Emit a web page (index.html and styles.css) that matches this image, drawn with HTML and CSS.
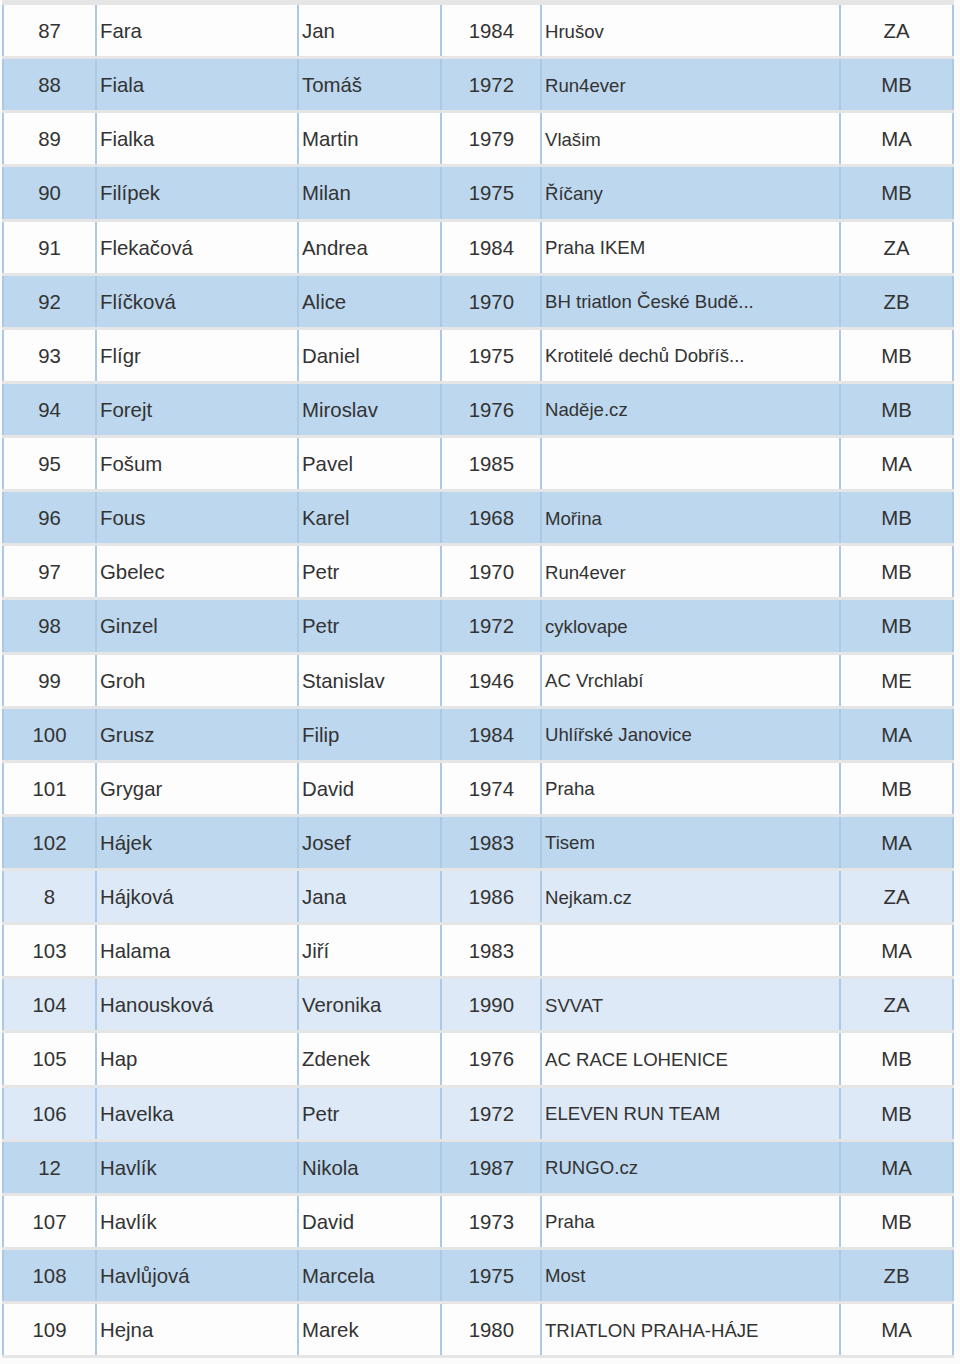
FILE: index.html
```html
<!DOCTYPE html>
<html lang="cs">
<head>
<meta charset="utf-8">
<title>Startovní listina</title>
<link rel="stylesheet" href="styles.css">
</head>
<body>
<div class="table">
  <div class="row w"><div class="c num">87</div><div class="c">Fara</div><div class="c">Jan</div><div class="c year">1984</div><div class="c club">Hrušov</div><div class="c cat">ZA</div></div>
  <div class="row b"><div class="c num">88</div><div class="c">Fiala</div><div class="c">Tomáš</div><div class="c year">1972</div><div class="c club">Run4ever</div><div class="c cat">MB</div></div>
  <div class="row w"><div class="c num">89</div><div class="c">Fialka</div><div class="c">Martin</div><div class="c year">1979</div><div class="c club">Vlašim</div><div class="c cat">MA</div></div>
  <div class="row b"><div class="c num">90</div><div class="c">Filípek</div><div class="c">Milan</div><div class="c year">1975</div><div class="c club">Říčany</div><div class="c cat">MB</div></div>
  <div class="row w"><div class="c num">91</div><div class="c">Flekačová</div><div class="c">Andrea</div><div class="c year">1984</div><div class="c club">Praha IKEM</div><div class="c cat">ZA</div></div>
  <div class="row b"><div class="c num">92</div><div class="c">Flíčková</div><div class="c">Alice</div><div class="c year">1970</div><div class="c club">BH triatlon České Budě...</div><div class="c cat">ZB</div></div>
  <div class="row w"><div class="c num">93</div><div class="c">Flígr</div><div class="c">Daniel</div><div class="c year">1975</div><div class="c club">Krotitelé dechů Dobříš...</div><div class="c cat">MB</div></div>
  <div class="row b"><div class="c num">94</div><div class="c">Forejt</div><div class="c">Miroslav</div><div class="c year">1976</div><div class="c club">Naděje.cz</div><div class="c cat">MB</div></div>
  <div class="row w"><div class="c num">95</div><div class="c">Fošum</div><div class="c">Pavel</div><div class="c year">1985</div><div class="c club"></div><div class="c cat">MA</div></div>
  <div class="row b"><div class="c num">96</div><div class="c">Fous</div><div class="c">Karel</div><div class="c year">1968</div><div class="c club">Mořina</div><div class="c cat">MB</div></div>
  <div class="row w"><div class="c num">97</div><div class="c">Gbelec</div><div class="c">Petr</div><div class="c year">1970</div><div class="c club">Run4ever</div><div class="c cat">MB</div></div>
  <div class="row b"><div class="c num">98</div><div class="c">Ginzel</div><div class="c">Petr</div><div class="c year">1972</div><div class="c club">cyklovape</div><div class="c cat">MB</div></div>
  <div class="row w"><div class="c num">99</div><div class="c">Groh</div><div class="c">Stanislav</div><div class="c year">1946</div><div class="c club">AC Vrchlabí</div><div class="c cat">ME</div></div>
  <div class="row b"><div class="c num">100</div><div class="c">Grusz</div><div class="c">Filip</div><div class="c year">1984</div><div class="c club">Uhlířské Janovice</div><div class="c cat">MA</div></div>
  <div class="row w"><div class="c num">101</div><div class="c">Grygar</div><div class="c">David</div><div class="c year">1974</div><div class="c club">Praha</div><div class="c cat">MB</div></div>
  <div class="row b"><div class="c num">102</div><div class="c">Hájek</div><div class="c">Josef</div><div class="c year">1983</div><div class="c club">Tisem</div><div class="c cat">MA</div></div>
  <div class="row l"><div class="c num">8</div><div class="c">Hájková</div><div class="c">Jana</div><div class="c year">1986</div><div class="c club">Nejkam.cz</div><div class="c cat">ZA</div></div>
  <div class="row w"><div class="c num">103</div><div class="c">Halama</div><div class="c">Jiří</div><div class="c year">1983</div><div class="c club"></div><div class="c cat">MA</div></div>
  <div class="row l"><div class="c num">104</div><div class="c">Hanousková</div><div class="c">Veronika</div><div class="c year">1990</div><div class="c club">SVVAT</div><div class="c cat">ZA</div></div>
  <div class="row w"><div class="c num">105</div><div class="c">Hap</div><div class="c">Zdenek</div><div class="c year">1976</div><div class="c club">AC RACE LOHENICE</div><div class="c cat">MB</div></div>
  <div class="row l"><div class="c num">106</div><div class="c">Havelka</div><div class="c">Petr</div><div class="c year">1972</div><div class="c club">ELEVEN RUN TEAM</div><div class="c cat">MB</div></div>
  <div class="row b"><div class="c num">12</div><div class="c">Havlík</div><div class="c">Nikola</div><div class="c year">1987</div><div class="c club">RUNGO.cz</div><div class="c cat">MA</div></div>
  <div class="row w"><div class="c num">107</div><div class="c">Havlík</div><div class="c">David</div><div class="c year">1973</div><div class="c club">Praha</div><div class="c cat">MB</div></div>
  <div class="row b"><div class="c num">108</div><div class="c">Havlůjová</div><div class="c">Marcela</div><div class="c year">1975</div><div class="c club">Most</div><div class="c cat">ZB</div></div>
  <div class="row w"><div class="c num">109</div><div class="c">Hejna</div><div class="c">Marek</div><div class="c year">1980</div><div class="c club">TRIATLON PRAHA-HÁJE</div><div class="c cat">MA</div></div>
</div>
</body>
</html>
```
FILE: styles.css
```css
html, body {
  margin: 0;
  padding: 0;
  background: #fbfbfb;
}
body {
  font-family: "Liberation Sans", Arial, Helvetica, sans-serif;
  color: #333;
}
.table {
  display: flex;
  flex-direction: column;
  gap: 3px;
  padding: 5px 0 3px 2px;
  background: linear-gradient(to right, #fbfbfb 2px, #e5e5e5 2px, #e5e5e5 954px, #fbfbfb 954px);
}
.row {
  display: grid;
  grid-template-columns: 93px 202px 143px 100px 299px 115px;
  width: 952px;
  height: 51.125px;
}
.row.w { background: #fdfdfd; }
.row.b { background: #bdd7ee; }
.row.l { background: #dde9f6; }
.c {
  display: flex;
  align-items: center;
  box-sizing: border-box;
  border-left: 2px solid #abc8e5;
  padding: 2px 3px 0;
  font-size: 20.4px;
  white-space: nowrap;
  overflow: hidden;
}
.c.cat {
  border-right: 2px solid #abc8e5;
  justify-content: center;
}
.c.num { justify-content: center; }
.c.year { justify-content: flex-end; padding-right: 26px; }
.c.club { font-size: 18.6px; }
```
